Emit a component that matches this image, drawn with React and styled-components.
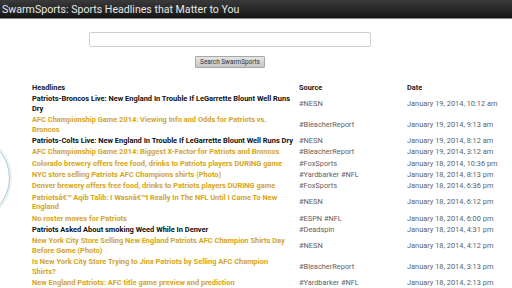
import React from 'react';
import styled, { createGlobalStyle } from 'styled-components';

const GlobalStyle = createGlobalStyle`
  html, body {
    margin: 0;
    padding: 0;
    background: #fff;
    font-family: Roboto, "Noto Sans", sans-serif;
    overflow: hidden;
  }
`;

const GOLD = '#d5a51d';

// titles keep the line breaks the feed showed
const headlines = [
  { title: 'Patriots-Broncos Live: New England In Trouble If LeGarrette Blount Well Runs Dry', source: '#NESN', date: 'January 19, 2014, 10:12 am', gold: false },
  { title: 'AFC Championship Game 2014: Viewing Info and Odds for Patriots vs.\nBroncos', source: '#BleacherReport', date: 'January 19, 2014, 9:13 am', gold: true },
  { title: 'Patriots-Colts Live: New England In Trouble If LeGarrette Blount Well Runs Dry', source: '#NESN', date: 'January 19, 2014, 8:12 am', gold: false },
  { title: 'AFC Championship Game 2014: Biggest X-Factor for Patriots and Broncos', source: '#BleacherReport', date: 'January 19, 2014, 3:12 am', gold: true },
  { title: 'Colorado brewery offers free food, drinks to Patriots players DURING game', source: '#FoxSports', date: 'January 18, 2014, 10:36 pm', gold: true },
  { title: 'NYC store selling Patriots AFC Champions shirts (Photo)', source: '#Yardbarker #NFL', date: 'January 18, 2014, 8:13 pm', gold: true },
  { title: 'Denver brewery offers free food, drinks to Patriots players DURING game', source: '#FoxSports', date: 'January 18, 2014, 6:36 pm', gold: true },
  { title: 'Patriotsâ€™ Aqib Talib: I Wasnâ€™t Really In The NFL Until I Came To New England', source: '#NESN', date: 'January 18, 2014, 6:12 pm', gold: true },
  { title: 'No roster moves for Patriots', source: '#ESPN #NFL', date: 'January 18, 2014, 6:00 pm', gold: true },
  { title: 'Patriots Asked About smoking Weed While In Denver', source: '#Deadspin', date: 'January 18, 2014, 4:31 pm', gold: false },
  { title: 'New York City Store Selling New England Patriots AFC Champion Shirts Day Before Game (Photo)', source: '#NESN', date: 'January 18, 2014, 4:12 pm', gold: true },
  { title: 'Is New York City Store Trying to Jinx Patriots by Selling AFC Champion\nShirts?', source: '#BleacherReport', date: 'January 18, 2014, 3:13 pm', gold: true },
  { title: 'New England Patriots: AFC title game preview and prediction', source: '#Yardbarker #NFL', date: 'January 18, 2014, 2:13 pm', gold: true },
];

const Page = styled.div`
  position: relative;
  width: 512px;
  height: 288px;
  overflow: hidden;
`;

const TopBar = styled.header`
  height: 18px;
  padding-left: 2px;
  display: flex;
  align-items: center;
  background: linear-gradient(#3a3a3a, #151515);
  border-bottom: 1px solid #8a8a8a;
  color: #e8e8e8;
  font-size: 10.6px;
  white-space: nowrap;
`;

const SearchForm = styled.form`
  width: 460px;
  margin-top: 13px;
  display: flex;
  flex-direction: column;
  align-items: center;
  gap: 9px;
`;

const SearchInput = styled.input`
  box-sizing: border-box;
  width: 282px;
  height: 15px;
  border: 1px solid #cfcfcf;
  border-radius: 2px;
  background: #fff;
  outline: none;
`;

const SearchButton = styled.button`
  box-sizing: border-box;
  width: 70px;
  height: 12px;
  padding: 0;
  border: 1px solid #a8a8a8;
  border-radius: 1px;
  background: linear-gradient(#e6e6e6, #c4c4c4);
  color: #333;
  font-family: Roboto, sans-serif;
  font-size: 6.4px;
  line-height: 10px;
`;

const Table = styled.table`
  margin: 14px 0 0 31px;
  width: 469px;
  table-layout: fixed;
  border-collapse: collapse;
  font-size: 7.4px;
  line-height: 9.7px;
`;

const Col = styled.col`
  width: ${p => p.w}px;
`;

const Th = styled.th`
  text-align: left;
  font-weight: 700;
  color: #222;
  padding: 0.8px 1px;
`;

const Td = styled.td`
  padding: 0.8px 1px;
  vertical-align: middle;
  color: #626262;
`;

const TitleCell = styled(Td)`
  font-weight: 700;
  font-size: 7.45px;
  white-space: pre-line;
  color: ${p => (p.gold ? GOLD : '#111')};
`;

const Ring = styled.div`
  position: absolute;
  left: -76px;
  top: 135px;
  width: 84px;
  height: 84px;
  border-radius: 50%;
  border: 1.5px solid #a9c8da;
  box-shadow: 0 0 0 2px #eef0f2;
`;

export default function App() {
  return (
    <Page>
      <GlobalStyle />
      <TopBar>SwarmSports: Sports Headlines that Matter to You</TopBar>
      <SearchForm onSubmit={e => e.preventDefault()}>
        <SearchInput type="text" />
        <SearchButton type="submit">Search SwarmSports</SearchButton>
      </SearchForm>
      <Table>
        <colgroup>
          <Col w={267} />
          <Col w={108} />
          <Col w={94} />
        </colgroup>
        <thead>
          <tr>
            <Th>Headlines</Th>
            <Th>Source</Th>
            <Th>Date</Th>
          </tr>
        </thead>
        <tbody>
          {headlines.map((h, i) => (
            <tr key={i}>
              <TitleCell gold={h.gold}>{h.title}</TitleCell>
              <Td>{h.source}</Td>
              <Td>{h.date}</Td>
            </tr>
          ))}
        </tbody>
      </Table>
      <Ring />
    </Page>
  );
}
